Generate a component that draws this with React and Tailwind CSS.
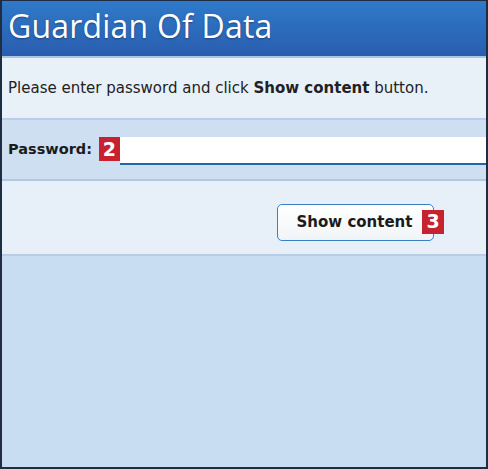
export default function App() {
  return (
    <div className="w-[488px] h-[469px] overflow-hidden bg-[#1e2d42] pl-[2px] pr-[2px] pb-[2px] pt-[1px]" style={{ fontFamily: '"DejaVu Sans", Verdana, sans-serif' }}>
      <div className="h-full flex flex-col bg-[#c9ddf2]">
        <div className="h-[57px] flex items-center pl-[6px] pb-[6px] bg-gradient-to-b from-[#2f7ac9] to-[#2a5daf] border-b-[2px] border-[#a8c7e2]">
          <span className="text-white text-[32px] leading-none tracking-[0.2px] [text-shadow:0_1px_2px_rgba(0,0,0,0.35)]" style={{ fontFamily: '"Open Sans", "Noto Sans", sans-serif' }}>Guardian Of Data</span>
        </div>
        <div className="h-[62px] flex items-center pl-[6px] bg-[#e8f0f8] border-b-[2px] border-[#b8cfe5]">
          <span className="text-[15px] text-[#222]">Please enter password and click <b>Show content</b> button.</span>
        </div>
        <div className="h-[61px] flex items-center pl-[6px] bg-[#cddff1] border-b-[2px] border-[#b3c9df]">
          <span className="text-[14.5px] font-bold text-[#1b1b1b]">Password:</span>
          <div className="ml-[7px] self-start mt-[17px] flex flex-1">
            <span className="w-[21px] h-[24px] bg-[#c6222f] text-white font-bold text-[19px] flex items-center justify-center leading-none">2</span>
            <div className="flex-1 h-[28px] bg-white border-b-[2px] border-[#2067ad]" />
          </div>
        </div>
        <div className="h-[75px] flex items-center justify-end pr-[52px] pt-[9px] bg-[#e7eff8] border-b-[2px] border-[#b7cee5]">
          <div className="relative">
            <button className="w-[157px] h-[37px] rounded-[5px] border-[1.5px] border-[#3b80c2] bg-gradient-to-b from-white to-[#f1f4f7] text-[15px] font-bold text-[#1b1b1b] pr-[2px]">Show content</button>
            <span className="absolute right-[-10px] top-[6px] w-[22px] h-[24px] bg-[#c6222f] text-white font-bold text-[19px] flex items-center justify-center leading-none">3</span>
          </div>
        </div>
        <div className="flex-1" />
      </div>
    </div>
  );
}
